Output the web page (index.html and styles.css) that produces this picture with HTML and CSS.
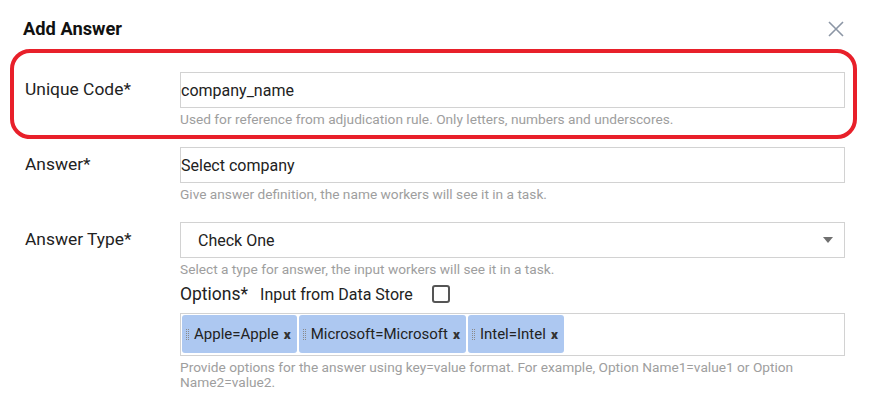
FILE: index.html
```html
<!DOCTYPE html>
<html lang="en">
<head>
    <meta charset="UTF-8">
    <meta name="viewport" content="width=device-width, initial-scale=1.0">
    <title>Add Answer</title>
    <link rel="stylesheet" href="styles.css">
</head>
<body>
    <div class="modal">
        <div class="modal-header">
            <h1>Add Answer</h1>
            <button class="close-btn" type="button" aria-label="Close">
                <svg width="16" height="16" viewBox="0 0 16 16">
                    <path d="M1 1L15 15M15 1L1 15" stroke="#8c96a5" stroke-width="1.6" fill="none"/>
                </svg>
            </button>
        </div>

        <!-- Unique code (highlighted) -->
        <div class="highlight">
            <div class="form-row">
                <label for="uniqueCode">Unique Code*</label>
                <div class="field">
                    <input type="text" id="uniqueCode" value="company_name">
                    <p class="help">Used for reference from adjudication rule. Only letters, numbers and underscores.</p>
                </div>
            </div>
        </div>

        <div class="form-row">
            <label for="answerName">Answer*</label>
            <div class="field">
                <input type="text" id="answerName" value="Select company">
                <p class="help">Give answer definition, the name workers will see it in a task.</p>
            </div>
        </div>

        <div class="form-row">
            <label>Answer Type*</label>
            <div class="field">
                <div class="select-box">
                    <span>Check One</span>
                    <span class="caret"></span>
                </div>
                <p class="help">Select a type for answer, the input workers will see it in a task.</p>

                <div class="options-head">
                    <span class="options-label">Options*</span>
                    <span class="data-store">Input from Data Store</span>
                    <span class="checkbox"></span>
                </div>

                <div class="tag-box">
                    <span class="tag"><span class="grip"></span>Apple=Apple<span class="tag-x">x</span></span>
                    <span class="tag"><span class="grip"></span>Microsoft=Microsoft<span class="tag-x">x</span></span>
                    <span class="tag"><span class="grip"></span>Intel=Intel<span class="tag-x">x</span></span>
                </div>
                <p class="help help-long">Provide options for the answer using key=value format. For example, Option Name1=value1 or Option Name2=value2.</p>
            </div>
        </div>
    </div>
</body>
</html>
```

FILE: styles.css
```css
body {
    font-family: Roboto, "Liberation Sans", Arial, sans-serif;
    margin: 0;
    padding: 0;
    background-color: #fff;
    color: #222;
}

.modal {
    width: 820px;
    padding: 0 25px;
}

.modal-header {
    display: flex;
    justify-content: space-between;
    align-items: center;
    padding-top: 16px;
    margin-bottom: 7px;
}

.modal-header h1 {
    font-size: 18.3px;
    font-weight: bold;
    line-height: 26px;
    margin: 0 0 0 -2px;
    color: #111;
}

.close-btn {
    background: none;
    border: none;
    padding: 0;
    width: 16px;
    height: 16px;
    margin-right: 1px;
    cursor: pointer;
}

.close-btn svg {
    display: block;
}

.highlight {
    margin: 0 -12px 8px -15px;
    padding: 19px 8px 8px 11px;
    border: 4px solid #e8202a;
    border-radius: 20px;
}

.highlight .form-row {
    margin-bottom: 0;
}

.form-row {
    display: grid;
    grid-template-columns: 155px 1fr;
    margin-bottom: 20px;
}

.form-row label {
    font-size: 17.4px;
    line-height: 34px;
    color: #222;
}

.field input {
    box-sizing: border-box;
    width: 100%;
    height: 36px;
    border: 1px solid #d2d2d2;
    padding: 0;
    font-family: inherit;
    font-size: 16px;
    color: #222;
    outline: none;
}

.help {
    margin: 3px 0 0;
    font-size: 13.7px;
    line-height: 16px;
    color: #9e9e9e;
}

.help-long {
    line-height: 15px;
    margin-top: 4px;
}

.select-box {
    box-sizing: border-box;
    height: 36px;
    border: 1px solid #d2d2d2;
    display: flex;
    align-items: center;
    justify-content: space-between;
    padding: 0 11px 0 17px;
    font-size: 16px;
}

.caret {
    width: 0;
    height: 0;
    border-left: 5px solid transparent;
    border-right: 5px solid transparent;
    border-top: 6px solid #707070;
}

.options-head {
    display: flex;
    align-items: center;
    margin-top: 5px;
    height: 24px;
}

.options-label {
    font-size: 17.5px;
    margin-right: 12px;
}

.data-store {
    font-size: 16px;
    margin-right: 19px;
}

.checkbox {
    box-sizing: border-box;
    width: 18px;
    height: 18px;
    border: 2px solid #555;
    border-radius: 3px;
}

.tag-box {
    box-sizing: border-box;
    margin-top: 7px;
    height: 43px;
    border: 1px solid #d2d2d2;
    padding: 1px;
    display: flex;
    gap: 2px;
}

.tag {
    display: flex;
    align-items: center;
    height: 38px;
    padding: 0 6px 0 4px;
    background-color: #adc8f1;
    border-radius: 3px;
    font-size: 15px;
    color: #222;
}

/* two dotted columns: stripes with the middle column hidden */
.grip {
    width: 3px;
    height: 11px;
    margin-right: 5px;
    background:
        linear-gradient(to right, transparent 1px, #adc8f1 1px 2px, transparent 2px),
        repeating-linear-gradient(to bottom, #8a8a8a 0 1px, transparent 1px 2px);
}

.tag-x {
    font-size: 13.5px;
    font-weight: 900;
    margin-left: 5px;
    color: #333;
}
```
